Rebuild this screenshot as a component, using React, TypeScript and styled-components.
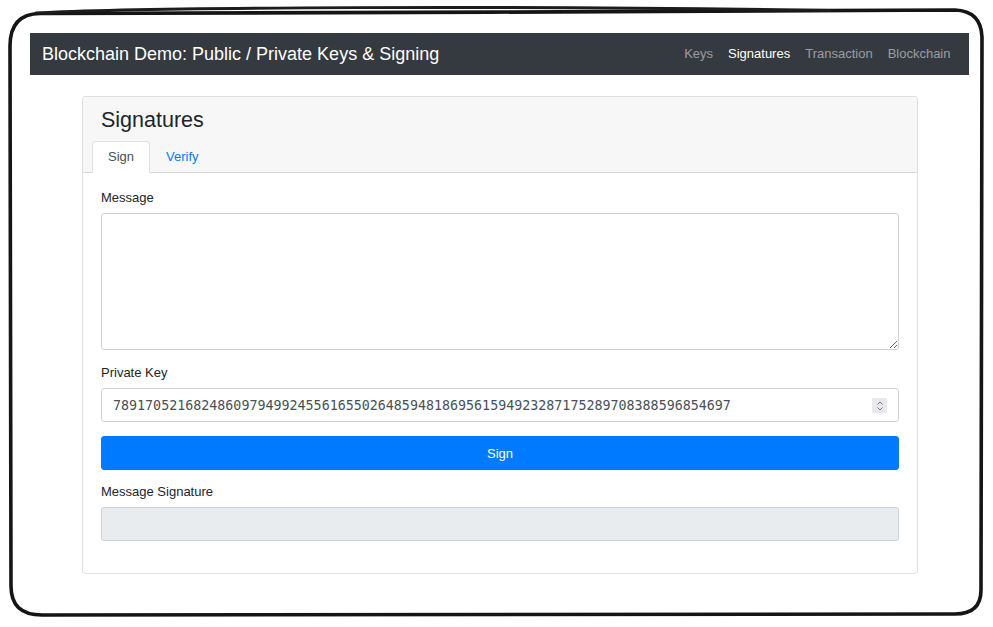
import React from "react";
import styled, { createGlobalStyle } from "styled-components";

const GlobalStyle = createGlobalStyle`
  html, body {
    margin: 0;
    padding: 0;
    background: #fff;
  }
  * {
    box-sizing: border-box;
  }
  body {
    font-family: "Liberation Sans", Arial, sans-serif;
    color: #212529;
  }
`;

const PRIVATE_KEY =
  "78917052168248609794992455616550264859481869561594923287175289708388596854697";

const links = [
  { label: "Keys", active: false },
  { label: "Signatures", active: true },
  { label: "Transaction", active: false },
  { label: "Blockchain", active: false },
];

// hand-drawn border round the whole screenshot
function SketchFrame() {
  return (
    <FrameSvg viewBox="0 0 993 627" width="993" height="627">
      <path
        d="M 40 13.5 C 300 13.5, 700 11, 955 10 Q 981 11, 982 37 L 981 590 Q 981 614, 955 614 L 42 615 Q 11 615, 11 586 L 10 46 Q 10 14, 40 13.5 Z"
        fill="none"
        stroke="#151515"
        strokeWidth="3.6"
        strokeLinejoin="round"
      />
      <path
        d="M 36 13 C 140 7, 520 5.5, 830 10.5"
        fill="none"
        stroke="#1c1c1c"
        strokeWidth="3"
        strokeLinecap="round"
      />
    </FrameSvg>
  );
}

function Spinner() {
  return (
    <SpinBox>
      <svg width="8" height="12" viewBox="0 0 8 12">
        <path d="M1.5 4.5 L4 2 L6.5 4.5" fill="none" stroke="#777" strokeWidth="1" />
        <path d="M1.5 7.5 L4 10 L6.5 7.5" fill="none" stroke="#777" strokeWidth="1" />
      </svg>
    </SpinBox>
  );
}

export default function App() {
  return (
    <>
      <GlobalStyle />
      <Page>
        <SketchFrame />
        <Navbar>
          <Brand>Blockchain Demo: Public / Private Keys &amp; Signing</Brand>
          <NavLinks>
            {links.map((l) => (
              <NavLink key={l.label} $active={l.active}>
                {l.label}
              </NavLink>
            ))}
          </NavLinks>
        </Navbar>

        <Card>
          <CardHeader>
            <CardTitle>Signatures</CardTitle>
            <Tabs>
              <Tab $active>Sign</Tab>
              <Tab>Verify</Tab>
            </Tabs>
          </CardHeader>
          <CardBody>
            <Group>
              <Label>Message</Label>
              <TextArea />
            </Group>
            <Group $gap={14}>
              <Label>Private Key</Label>
              <InputWrap>
                <Input type="text" defaultValue={PRIVATE_KEY} />
                <Spinner />
              </InputWrap>
            </Group>
            <SignButton>Sign</SignButton>
            <Group $gap={0}>
              <Label>Message Signature</Label>
              <ReadOnlyField />
            </Group>
          </CardBody>
        </Card>
      </Page>
    </>
  );
}

const Page = styled.div`
  position: relative;
  width: 993px;
  height: 627px;
  padding: 33px 24px 0 30px;
  overflow: hidden;
`;

const FrameSvg = styled.svg`
  position: absolute;
  left: 0;
  top: 0;
  pointer-events: none;
`;

const Navbar = styled.nav`
  height: 42px;
  background: #343a40;
  display: flex;
  align-items: center;
  justify-content: space-between;
  padding: 0 11px 0 12px;
`;

const Brand = styled.div`
  color: #fff;
  font-size: 18px;
  line-height: 26px;
`;

const NavLinks = styled.div`
  display: flex;
  align-items: center;
`;

const NavLink = styled.a<{ $active?: boolean }>`
  color: ${({ $active }) => ($active ? "#fff" : "rgba(255,255,255,0.5)")};
  font-size: 13px;
  line-height: 20px;
  padding: 0 7.5px;
  cursor: pointer;
`;

const Card = styled.div`
  width: 836px;
  margin: 21px 0 0 52px;
  border: 1px solid rgba(0, 0, 0, 0.125);
  border-radius: 4px;
  background: #fff;
`;

const CardHeader = styled.div`
  background: #f7f7f7;
  border-bottom: 1px solid rgba(0, 0, 0, 0.125);
  padding: 10px 18px 0;
  border-radius: 3px 3px 0 0;
`;

const CardTitle = styled.h3`
  margin: 0 0 8px;
  font-size: 21.5px;
  line-height: 26px;
  font-weight: 400;
  color: #212529;
`;

const Tabs = styled.div`
  display: flex;
  margin: 0 -9px -1px;
`;

const Tab = styled.div<{ $active?: boolean }>`
  padding: 5px 15px;
  font-size: 13px;
  line-height: 20px;
  border: 1px solid ${({ $active }) => ($active ? "#dee2e6" : "transparent")};
  border-bottom-color: ${({ $active }) => ($active ? "#fff" : "transparent")};
  border-radius: 4px 4px 0 0;
  background: ${({ $active }) => ($active ? "#fff" : "transparent")};
  color: ${({ $active }) => ($active ? "#495057" : "#007bff")};
`;

const CardBody = styled.div`
  padding: 15px 18px 32px;
`;

const Group = styled.div<{ $gap?: number }>`
  margin-bottom: ${({ $gap }) => ($gap ?? 13)}px;
`;

const Label = styled.label`
  display: block;
  font-size: 13px;
  line-height: 20px;
  margin-bottom: 5px;
  color: #212529;
`;

const TextArea = styled.textarea`
  display: block;
  width: 100%;
  height: 137px;
  border: 1px solid #ced4da;
  border-radius: 3px;
  resize: vertical;
  font-family: "Liberation Sans", Arial, sans-serif;
  font-size: 13px;
`;

const InputWrap = styled.div`
  position: relative;
`;

const Input = styled.input`
  display: block;
  width: 100%;
  height: 34px;
  border: 1px solid #ced4da;
  border-radius: 3px;
  padding: 0 36px 0 11px;
  font-family: "DejaVu Sans Mono", "Liberation Mono", monospace;
  font-size: 13.33px;
  color: #495057;
  background: #fff;
  outline: none;
`;

const SpinBox = styled.span`
  position: absolute;
  right: 12px;
  top: 10px;
  width: 15px;
  height: 15px;
  background: #e9e9ed;
  border-radius: 1px;
  display: flex;
  align-items: center;
  justify-content: center;
`;

const SignButton = styled.button`
  display: block;
  width: 100%;
  height: 34px;
  margin-bottom: 12px;
  border: 1px solid #007bff;
  border-radius: 3px;
  background: #007bff;
  color: #fff;
  font-family: "Liberation Sans", Arial, sans-serif;
  font-size: 13px;
  cursor: pointer;
`;

const ReadOnlyField = styled.div`
  height: 34px;
  border: 1px solid #ced4da;
  border-radius: 3px;
  background: #e9ecef;
`;
